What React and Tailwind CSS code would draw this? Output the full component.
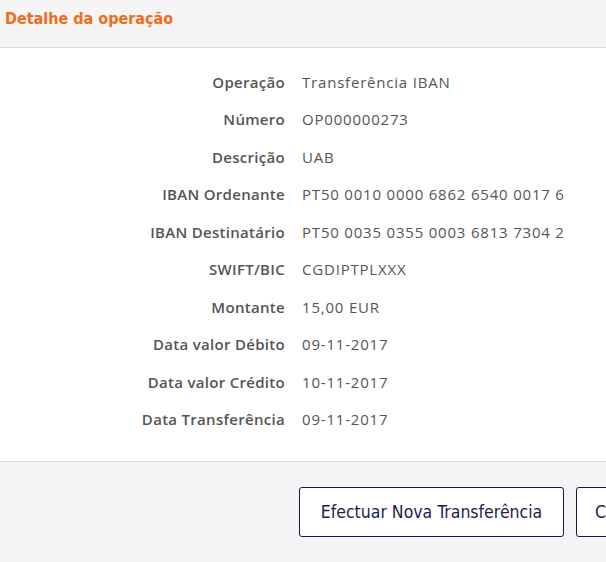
import React from "react";

const rows = [
  ["Operação", "Transferência IBAN"],
  ["Número", "OP000000273"],
  ["Descrição", "UAB"],
  ["IBAN Ordenante", "PT50 0010 0000 6862 6540 0017 6"],
  ["IBAN Destinatário", "PT50 0035 0355 0003 6813 7304 2"],
  ["SWIFT/BIC", "CGDIPTPLXXX"],
  ["Montante", "15,00 EUR"],
  ["Data valor Débito", "09-11-2017"],
  ["Data valor Crédito", "10-11-2017"],
  ["Data Transferência", "09-11-2017"],
];

export default function App() {
  return (
    <div className="w-[606px] h-[562px] overflow-hidden bg-white flex flex-col font-['Open_Sans',sans-serif]">
      {/* header */}
      <div className="h-[48px] shrink-0 bg-[#f5f5f5] border-b border-[#dcdcdc] px-[5px] pt-[7px]">
        <h2 className="font-['DejaVu_Sans_Condensed','DejaVu_Sans',sans-serif] font-bold text-[16px] text-[#f26b1d] leading-[24px]">
          Detalhe da operação
        </h2>
      </div>

      {/* details */}
      <div className="h-[413px] shrink-0 pt-[15px]">
        {rows.map(([label, value]) => (
          <div key={label} className="flex items-center h-[37.5px]">
            <div className="w-[285px] shrink-0 text-right text-[15px] tracking-[0.3px] font-semibold text-[#555]">
              {label}
            </div>
            <div className="pl-[17px] whitespace-nowrap text-[15px] tracking-[0.8px] text-[#555]">
              {value}
            </div>
          </div>
        ))}
      </div>

      {/* footer */}
      <div className="flex-1 bg-[#f4f4f6] border-t border-[#dcdcdc] pl-[299px] pt-[25px] flex gap-[12px] whitespace-nowrap">
        <button className="h-[50px] w-[265px] shrink-0 rounded-[3px] border border-[#16164a] bg-white text-[#1c1c50] text-[17.5px] font-['DejaVu_Sans_Condensed','DejaVu_Sans',sans-serif]">
          Efectuar Nova Transferência
        </button>
        <button className="h-[50px] w-[200px] shrink-0 rounded-[3px] border border-[#16164a] bg-white text-[#1c1c50] text-[17.5px] text-left pl-[18px] font-['DejaVu_Sans_Condensed','DejaVu_Sans',sans-serif]">
          Comprovativo
        </button>
      </div>
    </div>
  );
}
